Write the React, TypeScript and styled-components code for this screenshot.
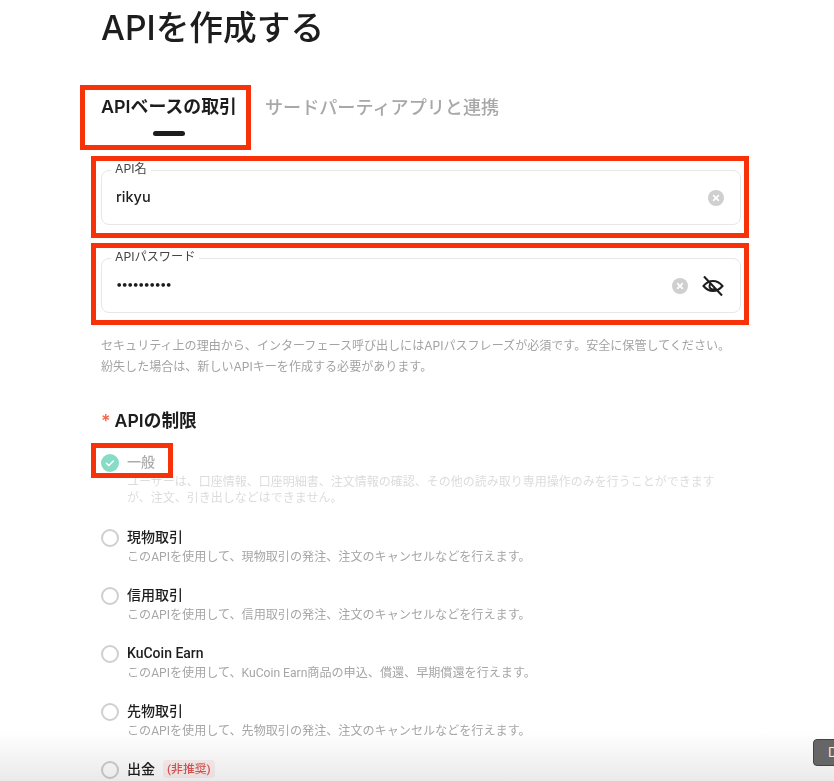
import React from "react";
import styled, { createGlobalStyle } from "styled-components";

const GlobalStyle = createGlobalStyle`
  html, body {
    margin: 0;
    padding: 0;
    height: 781px;
    overflow: hidden;
    background: #fff;
  }
  body {
    font-family: Inter, "Noto Sans CJK JP", sans-serif;
    color: #1d1d1d;
  }
`;

interface Permission {
  title: string;
  description: string[];
  checked?: boolean;
  deprecated?: boolean;
}

const permissions: Permission[] = [
  {
    title: "一般",
    checked: true,
    description: [
      "ユーザーは、口座情報、口座明細書、注文情報の確認、その他の読み取り専用操作のみを行うことができます",
      "が、注文、引き出しなどはできません。",
    ],
  },
  { title: "現物取引", description: ["このAPIを使用して、現物取引の発注、注文のキャンセルなどを行えます。"] },
  { title: "信用取引", description: ["このAPIを使用して、信用取引の発注、注文のキャンセルなどを行えます。"] },
  { title: "KuCoin Earn", description: ["このAPIを使用して、KuCoin Earn商品の申込、償還、早期償還を行えます。"] },
  { title: "先物取引", description: ["このAPIを使用して、先物取引の発注、注文のキャンセルなどを行えます。"] },
  { title: "出金", deprecated: true, description: [] },
];

const ClearIcon = () => (
  <svg width="16" height="16" viewBox="0 0 16 16">
    <circle cx="8" cy="8" r="8" fill="#cfcfcf" />
    <path d="M5.6 5.6l4.8 4.8M10.4 5.6l-4.8 4.8" stroke="#fff" strokeWidth="1.6" strokeLinecap="round" />
  </svg>
);

const EyeOffIcon = () => (
  <svg width="24" height="24" viewBox="0 0 24 24" fill="none" stroke="#1d1d1d" strokeWidth="2">
    <path d="M2.5 12c2.500-3 5.500-5 9.500-5s7 2 9.500 5c-2.500 3-5.500 5-9.500 5s-7-2-9.500-5z" />
    <path d="M9.500 9.800a3.300 3.300 0 0 0 4.700 4.700" />
    <path d="M3 2.500l18 19" />
  </svg>
);

const CheckedIcon = () => (
  <svg width="18" height="18" viewBox="0 0 18 18">
    <circle cx="9" cy="9" r="9" fill="#86dcc5" />
    <path d="M5.400 9.200l2.500 2.400 4.500-4.600" stroke="#fff" strokeWidth="1.500" fill="none" strokeLinecap="round" strokeLinejoin="round" />
  </svg>
);

const App: React.FC = () => {
  return (
    <Page>
      <GlobalStyle />
      <Title>APIを作成する</Title>

      <Tabs>
        <Tab $active>
          APIベースの取引
          <Marker $left={-21} $top={0} $width={171} $height={65} />
        </Tab>
        <Tab>サードパーティアプリと連携</Tab>
      </Tabs>

      <Field>
        <Legend>API名</Legend>
        <Value>rikyu</Value>
        <ClearIcon />
        <Marker $left={-11} $top={-15} $width={658} $height={82} />
      </Field>

      <Field $second>
        <Legend>APIパスワード</Legend>
        <Value $secret>••••••••••</Value>
        <ClearIcon />
        <EyeOffIcon />
        <Marker $left={-11} $top={-16} $width={658} $height={82} />
      </Field>

      <Hint>
        セキュリティ上の理由から、インターフェース呼び出しにはAPIパスフレーズが必須です。安全に保管してください。
        <br />
        紛失した場合は、新しいAPIキーを作成する必要があります。
      </Hint>

      <SectionTitle>
        <Star>*</Star>APIの制限
      </SectionTitle>

      <Options>
        {permissions.map((item) => (
          <Option key={item.title} $disabled={item.checked}>
            <Radio>{item.checked ? <CheckedIcon /> : <EmptyRadio />}</Radio>
            <OptionBody>
              <OptionTitle $disabled={item.checked}>
                {item.title}
                {item.deprecated && <Deprecated>(非推奨)</Deprecated>}
              </OptionTitle>
              {item.description.length > 0 && (
                <OptionText $disabled={item.checked}>
                  {item.description.map((line) => (
                    <div key={line}>{line}</div>
                  ))}
                </OptionText>
              )}
            </OptionBody>
            {item.checked && <Marker $left={-10} $top={-9} $width={82} $height={35} />}
          </Option>
        ))}
      </Options>

      <BottomFade />
      <FloatingButton>D</FloatingButton>
    </Page>
  );
};

export default App;

const Page = styled.div`
  position: relative;
  width: 834px;
  height: 781px;
  overflow: hidden;
  padding-left: 101px;
  box-sizing: border-box;
`;

const Title = styled.h1`
  margin: 0;
  padding-top: 7px;
  height: 85px;
  box-sizing: border-box;
  font-size: 33.700px;
  line-height: 42px;
  font-weight: 500;
  color: #1d1d1d;
`;

const Tabs = styled.div`
  display: flex;
  gap: 28px;
  height: 65px;
`;

const Tab = styled.div<{ $active?: boolean }>`
  position: relative;
  height: 46px;
  padding-top: 10px;
  box-sizing: border-box;
  font-size: ${(p) => (p.$active ? "17.900px" : "18.100px")};
  line-height: 24px;
  font-weight: ${(p) => (p.$active ? 600 : 500)};
  color: ${(p) => (p.$active ? "#1d1d1d" : "#a8a8a8")};

  ${(p) =>
    p.$active &&
    `
    &::before {
      content: "";
      position: absolute;
      left: 52px;
      top: 46px;
      width: 32px;
      height: 5px;
      border-radius: 3px;
      background: #1d1d1d;
    }
  `}
`;

const Marker = styled.span<{ $left: number; $top: number; $width: number; $height: number }>`
  position: absolute;
  left: ${(p) => p.$left}px;
  top: ${(p) => p.$top}px;
  width: ${(p) => p.$width}px;
  height: ${(p) => p.$height}px;
  box-sizing: border-box;
  border: 5px solid #f73208;
  pointer-events: none;
`;

const Field = styled.div<{ $second?: boolean }>`
  position: relative;
  width: 640px;
  height: 55px;
  margin-top: ${(p) => (p.$second ? "33px" : "20px")};
  padding: 0 ${(p) => (p.$second ? "15px" : "16px")} 0 14px;
  box-sizing: border-box;
  display: flex;
  align-items: center;
  gap: 13px;
  border: 1px solid #e7e7e7;
  border-radius: 8px;
`;

const Legend = styled.label`
  position: absolute;
  left: 9px;
  top: -10px;
  padding: 0 4px;
  background: #fff;
  font-size: 12.200px;
  line-height: 15px;
  color: #444;
`;

const Value = styled.div<{ $secret?: boolean }>`
  flex: 1;
  font-size: ${(p) => (p.$secret ? "12px" : "14.500px")};
  font-weight: 500;
  line-height: 18px;
  margin-top: ${(p) => (p.$secret ? "-3px" : "-1px")};
  color: #1d1d1d;
  letter-spacing: ${(p) => (p.$secret ? "-0.900px" : "0")};
`;

const Hint = styled.p`
  margin: 22px 0 0;
  width: 640px;
  font-size: 12.060px;
  line-height: 21px;
  color: #a3a3a3;
  white-space: nowrap;
`;

const SectionTitle = styled.h2`
  margin: 32px 0 0;
  font-size: 17.700px;
  line-height: 24px;
  font-weight: 600;
  color: #1d1d1d;
`;

const Star = styled.span`
  margin-right: 4px;
  color: #f5694a;
`;

const Options = styled.div`
  margin-top: 19px;
  display: flex;
  flex-direction: column;
  gap: 20px;
`;

const Option = styled.div<{ $disabled?: boolean }>`
  position: relative;
  display: flex;
  gap: 8px;
  padding-bottom: ${(p) => (p.$disabled ? "1px" : "0")};
`;

const Radio = styled.div`
  flex: none;
  width: 18px;
  height: 18px;
  margin-top: 2px;
`;

const EmptyRadio = styled.div`
  width: 18px;
  height: 18px;
  box-sizing: border-box;
  border: 2px solid #cfcfcf;
  border-radius: 50%;
`;

const OptionBody = styled.div`
  min-width: 0;
`;

const OptionTitle = styled.div<{ $disabled?: boolean }>`
  display: flex;
  align-items: center;
  gap: 8px;
  font-family: Roboto, "Noto Sans CJK JP", sans-serif;
  font-size: 14px;
  line-height: 20px;
  font-weight: 500;
  color: ${(p) => (p.$disabled ? "#ababab" : "#1d1d1d")};
`;

const OptionText = styled.div<{ $disabled?: boolean }>`
  padding-top: 2px;
  font-family: Roboto, "Noto Sans CJK JP", sans-serif;
  font-size: ${(p) => (p.$disabled ? "12px" : "12.100px")};
  line-height: 16px;
  color: ${(p) => (p.$disabled ? "#dcdcdc" : "#a6a6a6")};
  white-space: nowrap;
`;

const Deprecated = styled.span`
  padding: 1px 4px;
  border-radius: 4px;
  background: #fdf0f0;
  font-size: 11.800px;
  line-height: 16px;
  color: #e25555;
`;

const BottomFade = styled.div`
  position: absolute;
  left: 0;
  right: 0;
  bottom: 0;
  height: 50px;
  background: linear-gradient(to bottom, rgba(225, 225, 225, 0), rgba(225, 225, 225, 0.700));
  mix-blend-mode: multiply;
  pointer-events: none;
`;

const FloatingButton = styled.div`
  position: absolute;
  left: 813px;
  top: 739px;
  width: 60px;
  height: 27px;
  padding-left: 14px;
  box-sizing: border-box;
  border: 1px solid #444;
  border-radius: 4px;
  background: #666;
  color: #eee;
  font-size: 13px;
  line-height: 25px;
`;
